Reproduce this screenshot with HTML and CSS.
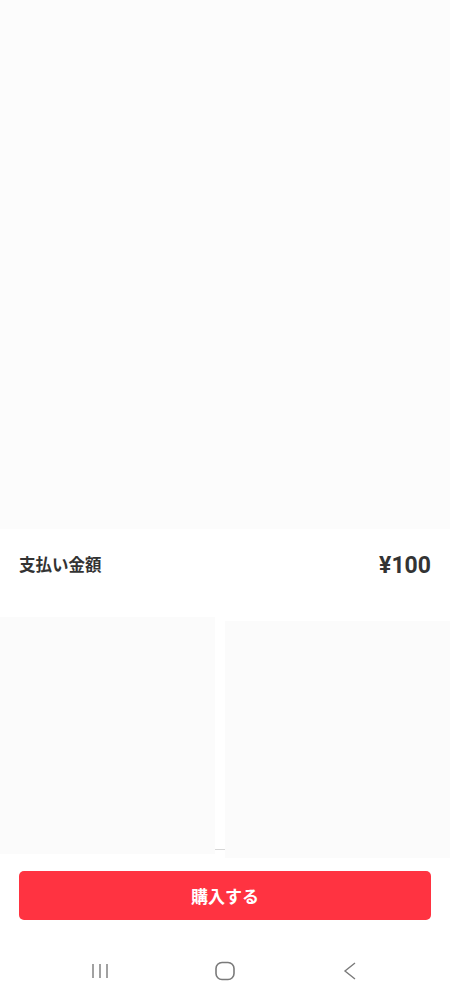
FILE: index.html
```html
<!DOCTYPE html>
<html lang="ja">
<head>
    <meta charset="UTF-8">
    <meta name="viewport" content="width=device-width, initial-scale=1.0">
    <title>支払い</title>
    <link rel="stylesheet" href="styles.css">
</head>
<body>

<div class="hero"></div>

<div class="amount-row">
    <span class="amount-label">支払い金額</span>
    <span class="amount-value">¥100</span>
</div>

<div class="panels">
    <div class="panel panel-left"></div>
    <div class="panel-divider"></div>
    <div class="panel panel-right"></div>
</div>

<div class="actions">
    <button class="buy-button">購入する</button>
</div>

<div class="nav-bar">
    <svg class="nav-icon" width="20" height="18" viewBox="0 0 20 18">
        <path d="M3 2v14M10 2v14M17 2v14" stroke="#7a7a7a" stroke-width="1.4" fill="none"/>
    </svg>
    <svg class="nav-icon" width="22" height="20" viewBox="0 0 22 20">
        <rect x="2" y="1.5" width="18" height="17" rx="6" stroke="#7a7a7a" stroke-width="1.6" fill="none"/>
    </svg>
    <svg class="nav-icon" width="16" height="20" viewBox="0 0 16 20">
        <path d="M13 2L3 10l10 8" stroke="#7a7a7a" stroke-width="1.4" fill="none"/>
    </svg>
</div>

</body>
</html>
```

FILE: styles.css
```css
body {
    margin: 0;
    background-color: #ffffff;
    font-family: Roboto, "Noto Sans CJK JP", sans-serif;
    color: #333333;
}
.hero {
    height: 529px;
    background-color: #fcfcfc;
}
.amount-row {
    display: flex;
    justify-content: space-between;
    align-items: center;
    height: 88px;
    padding: 0 19px 0 19px;
}
.amount-label {
    font-size: 16.5px;
    font-weight: bold;
    margin-bottom: 19px;
}
.amount-value {
    font-size: 23px;
    font-weight: bold;
    margin-bottom: 15px;
}
.panels {
    display: flex;
    align-items: flex-start;
}
.panel {
    background-color: #fbfbfb;
}
.panel-left {
    width: 215px;
    height: 237px;
}
.panel-divider {
    width: 10px;
    height: 1px;
    margin-top: 232px;
    background-color: #d6d6d6;
}
.panel-right {
    width: 225px;
    height: 237px;
    margin-top: 4px;
}
.actions {
    padding: 13px 19px 0 19px;
}
.buy-button {
    display: block;
    width: 100%;
    height: 49px;
    border: none;
    border-radius: 5px;
    background-color: #ff3341;
    color: #ffffff;
    font-family: "Noto Sans CJK JP", sans-serif;
    font-size: 17px;
    font-weight: bold;
    cursor: pointer;
}
.nav-bar {
    display: grid;
    grid-template-columns: repeat(3, 125px);
    justify-content: center;
    justify-items: center;
    align-items: center;
    height: 79px;
}
.nav-icon {
    margin-top: 22px;
}
```
